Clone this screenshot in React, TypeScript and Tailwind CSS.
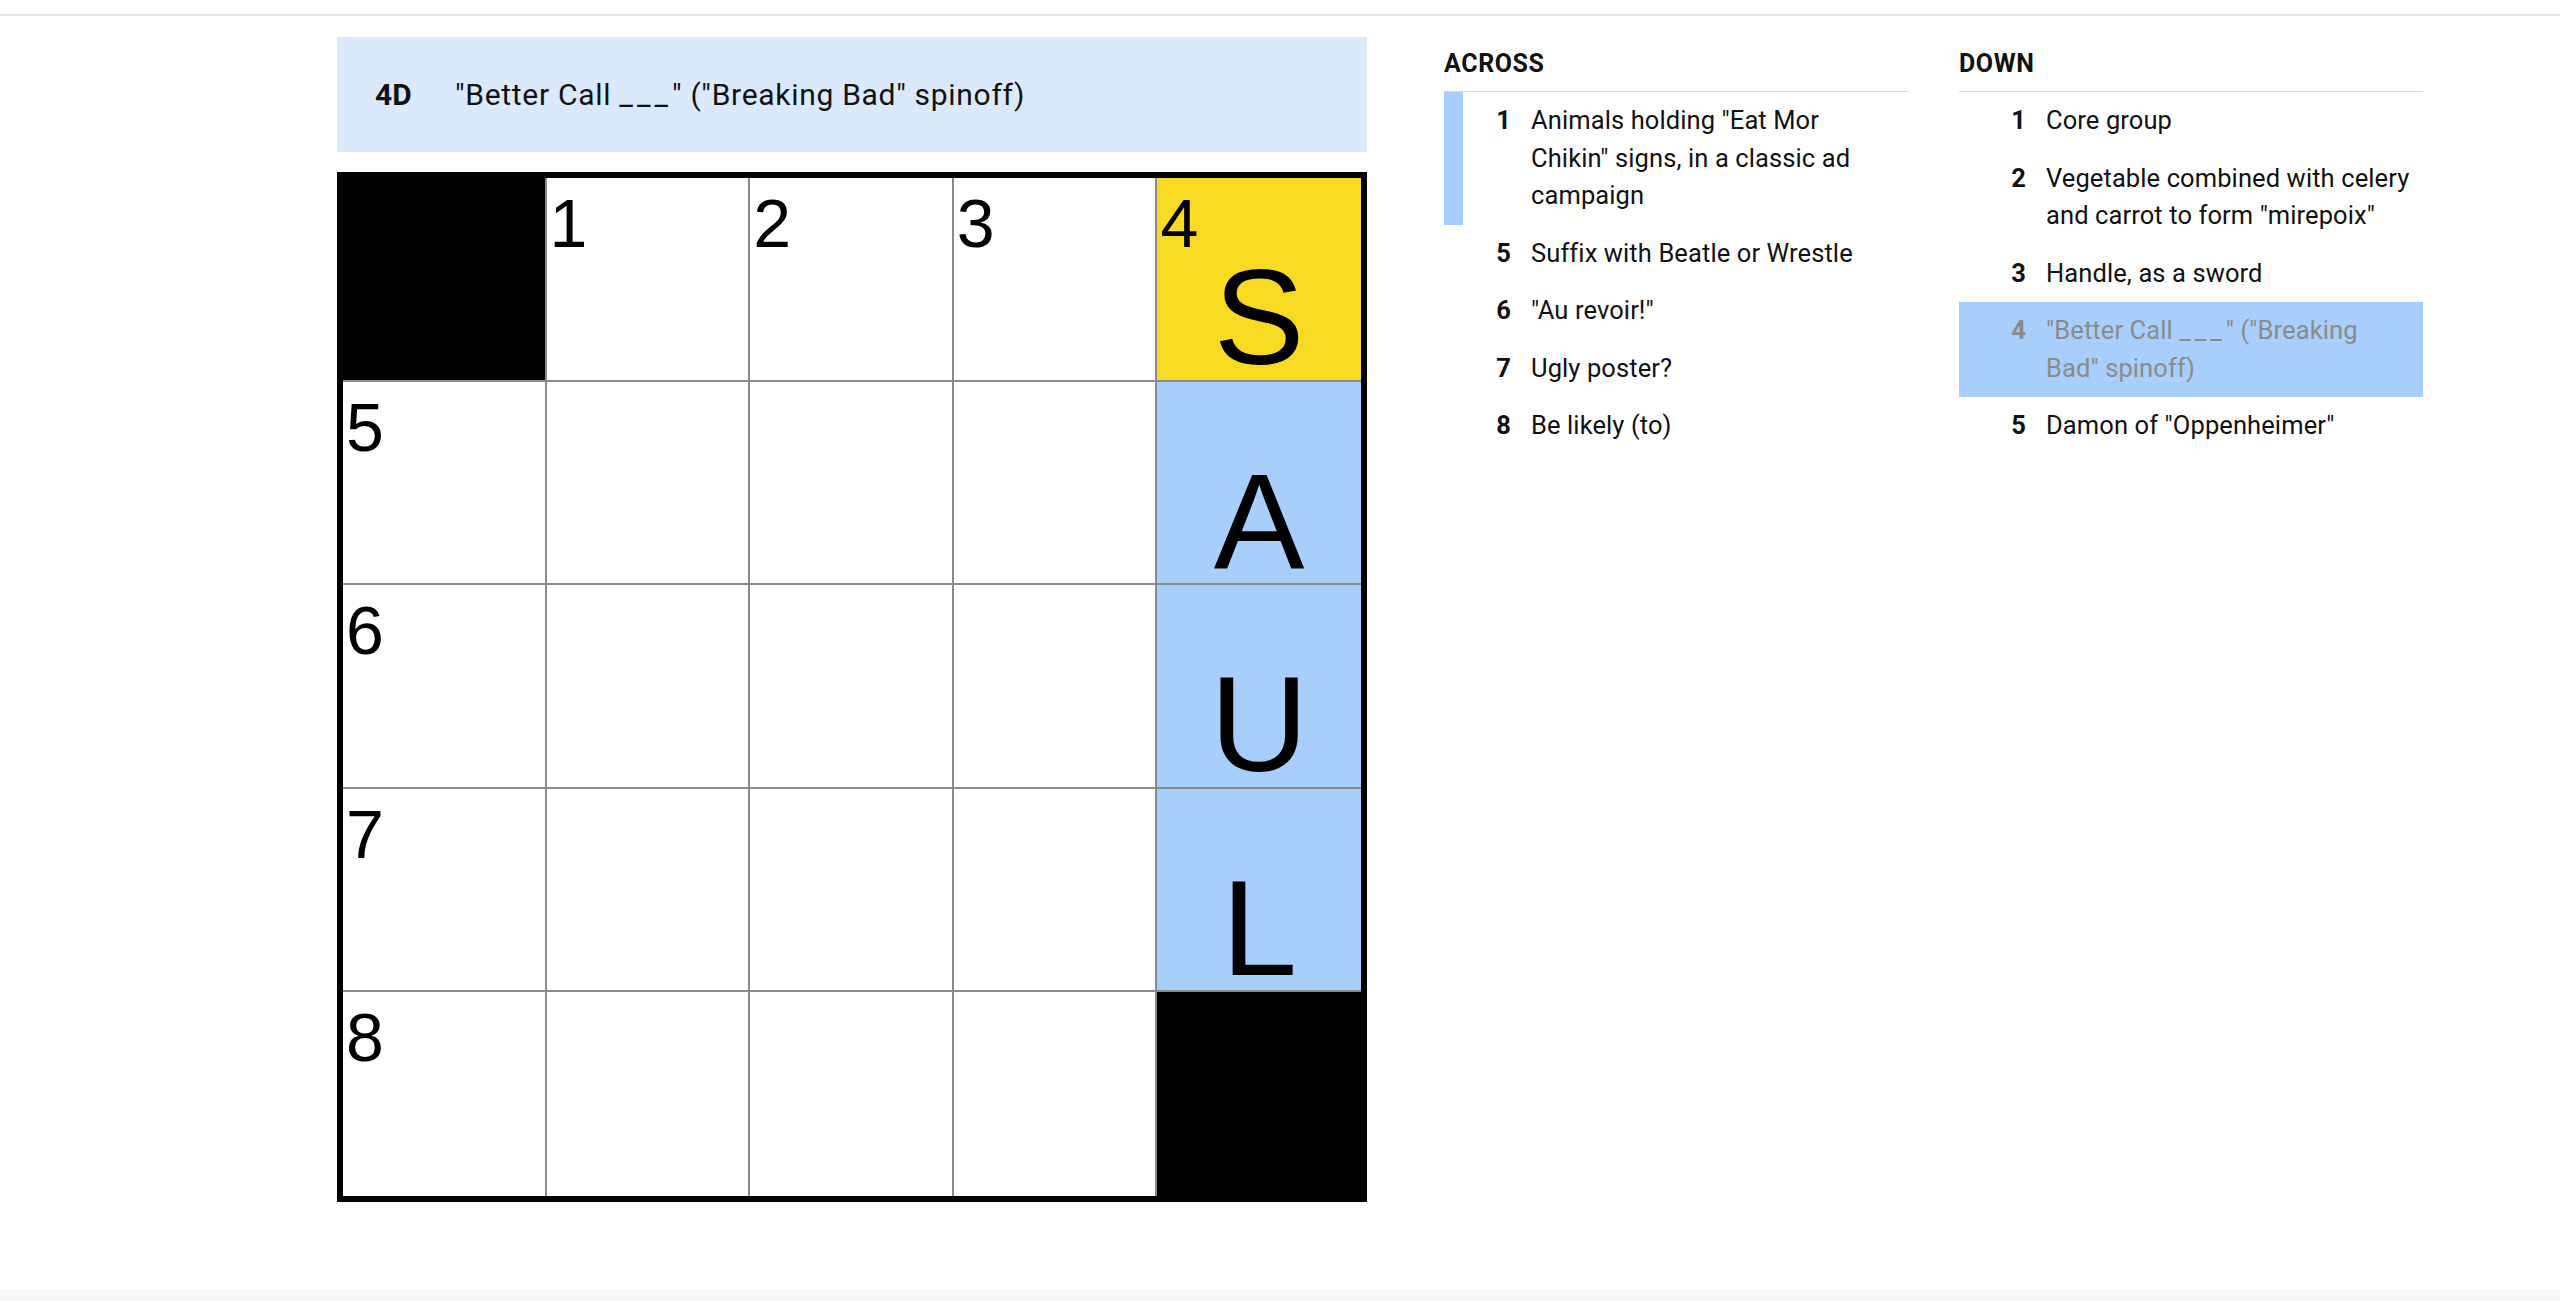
import React from "react";

type Cell = { black?: boolean; num?: number; letter?: string; state?: "active" | "word" };

const grid: Cell[][] = [
  [{ black: true }, { num: 1 }, { num: 2 }, { num: 3 }, { num: 4, letter: "S", state: "active" }],
  [{ num: 5 }, {}, {}, {}, { letter: "A", state: "word" }],
  [{ num: 6 }, {}, {}, {}, { letter: "U", state: "word" }],
  [{ num: 7 }, {}, {}, {}, { letter: "L", state: "word" }],
  [{ num: 8 }, {}, {}, {}, { black: true }],
];

interface Clue {
  num: number;
  text: string;
  cross?: boolean;
  selected?: boolean;
}

const across: Clue[] = [
  { num: 1, text: 'Animals holding "Eat Mor Chikin" signs, in a classic ad campaign', cross: true },
  { num: 5, text: "Suffix with Beatle or Wrestle" },
  { num: 6, text: '"Au revoir!"' },
  { num: 7, text: "Ugly poster?" },
  { num: 8, text: "Be likely (to)" },
];

const down: Clue[] = [
  { num: 1, text: "Core group" },
  { num: 2, text: 'Vegetable combined with celery and carrot to form "mirepoix"' },
  { num: 3, text: "Handle, as a sword" },
  { num: 4, text: '"Better Call ___" ("Breaking Bad" spinoff)', selected: true },
  { num: 5, text: 'Damon of "Oppenheimer"' },
];

const franklin = { fontFamily: "Roboto, 'Liberation Sans', sans-serif" };

// blanks get a little spacing so the underscores read as separate dashes
function ClueText({ text }: { text: string }) {
  const parts = text.split("___");
  return (
    <>
      {parts.map((p, i) => (
        <React.Fragment key={i}>
          {p}
          {i < parts.length - 1 && <span className="tracking-[4px]">___</span>}
        </React.Fragment>
      ))}
    </>
  );
}

function GridCell({ cell, row, col }: { cell: Cell; row: number; col: number }) {
  const edges = `${col < 4 ? "border-r-2" : ""} ${row < 4 ? "border-b-2" : ""}`;
  let bg = "bg-white";
  if (cell.black) bg = "bg-black";
  else if (cell.state === "active") bg = "bg-[#f7da21]";
  else if (cell.state === "word") bg = "bg-[#a8cefb]";

  return (
    <div className={`relative border-[#8a8a8a] ${edges} ${bg}`}>
      {cell.num && (
        <span className="absolute left-[3px] top-[11px] text-[68px] leading-none text-black">
          {cell.num}
        </span>
      )}
      {cell.letter && (
        <span className="absolute inset-x-0 top-[71px] text-center text-[136px] leading-none text-black">
          {cell.letter}
        </span>
      )}
    </div>
  );
}

function ClueList({ title, clues }: { title: string; clues: Clue[] }) {
  return (
    <div className="w-[464px] mt-[12px]" style={franklin}>
      <h3 className="text-[25px] leading-[30px] font-bold tracking-[0.6px] text-[#121212] pb-[12px] border-b border-[#dcdcdc]">
        {title}
      </h3>
      <ol>
        {clues.map((c) => (
          <li
            key={c.num}
            className={`flex py-[10px] pr-[12px] border-l-[19px] text-[25.5px] leading-[37.5px] tracking-[0.1px] ${
              c.cross ? "border-[#a8cefb]" : "border-transparent"
            } ${c.selected ? "bg-[#a8cefb] border-[#a8cefb] text-[#8b8b8b]" : "text-[#121212]"}`}
          >
            <span className="w-[48px] shrink-0 text-right font-bold">{c.num}</span>
            <span className="ml-[20px]">
              <ClueText text={c.text} />
            </span>
          </li>
        ))}
      </ol>
    </div>
  );
}

export default function App() {
  return (
    <div className="h-[1301px] flex flex-col bg-white">
      <div className="h-[16px] shrink-0 border-b-2 border-[#e4e4e4]" />

      <main className="flex-1 flex items-start pt-[21px] pl-[337px]">
        <section className="w-[1030px]" style={{ fontFamily: "'Liberation Sans', Arial, sans-serif" }}>
          <div
            className="h-[115px] flex items-center pl-[38px] bg-[#dbe9fc] text-[30px] text-[#121212]"
            style={franklin}
          >
            <span className="w-[80px] font-bold">4D</span>
            <span className="tracking-[0.7px]">
              <ClueText text={'"Better Call ___" ("Breaking Bad" spinoff)'} />
            </span>
          </div>

          <div className="mt-[20px] w-[1030px] h-[1030px] border-[6px] border-black grid grid-cols-5 grid-rows-5">
            {grid.map((row, r) =>
              row.map((cell, c) => <GridCell key={`${r}-${c}`} cell={cell} row={r} col={c} />)
            )}
          </div>
        </section>

        <div className="ml-[77px] flex gap-[51px]">
          <ClueList title="ACROSS" clues={across} />
          <ClueList title="DOWN" clues={down} />
        </div>
      </main>

      <div className="h-[12px] shrink-0 bg-[#f8f8f8]" />
    </div>
  );
}
